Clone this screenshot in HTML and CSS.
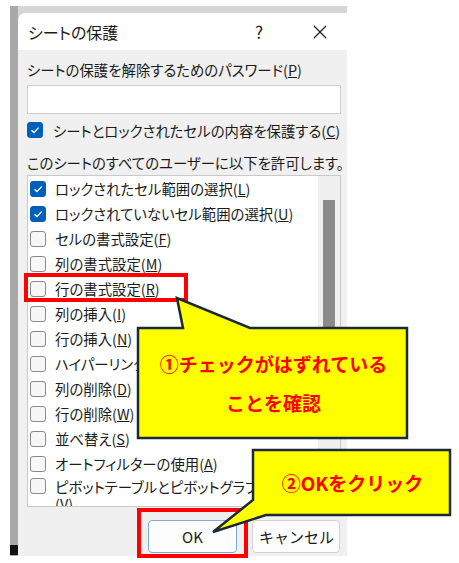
FILE: index.html
```html
<!DOCTYPE html>
<html lang="ja">
<head>
    <meta charset="UTF-8">
    <title>シートの保護</title>
    <link rel="stylesheet" href="styles.css">
</head>
<body>
<div class="sheet">
    <div class="sheet-edge"><div class="sheet-edge-end"></div></div>
    <div class="dialog">
        <div class="titlebar">
            <span class="title">シートの保護</span>
            <span class="help">?</span>
            <span class="close">
                <svg width="16" height="16" viewBox="0 0 16 16"><path d="M2 2 L14 14 M14 2 L2 14" stroke="#222" stroke-width="1.3" fill="none"/></svg>
            </span>
        </div>
        <div class="body">
            <div class="field-label">シートの保護を解除するためのパスワード(<u>P</u>)</div>
            <input class="password" type="password">
            <div class="check-row protect">
                <span class="box checked"><svg width="14" height="14" viewBox="0 0 14 14"><path d="M3.5 7.2 L6 9.6 L10.6 4.6" stroke="#fff" stroke-width="1.4" fill="none"/></svg></span>
                <span>シートとロックされたセルの内容を保護する(<u>C</u>)</span>
            </div>
            <div class="allow-label">このシートのすべてのユーザーに以下を許可します。</div>
            <div class="list">
                <div class="items">
                    <div class="check-row item"><span class="box checked"><svg width="14" height="14" viewBox="0 0 14 14"><path d="M3.5 7.2 L6 9.6 L10.6 4.6" stroke="#fff" stroke-width="1.4" fill="none"/></svg></span><span>ロックされたセル範囲の選択(<u>L</u>)</span></div>
                    <div class="check-row item"><span class="box checked"><svg width="14" height="14" viewBox="0 0 14 14"><path d="M3.5 7.2 L6 9.6 L10.6 4.6" stroke="#fff" stroke-width="1.4" fill="none"/></svg></span><span>ロックされていないセル範囲の選択(<u>U</u>)</span></div>
                    <div class="check-row item"><span class="box"></span><span>セルの書式設定(<u>F</u>)</span></div>
                    <div class="check-row item"><span class="box"></span><span>列の書式設定(<u>M</u>)</span></div>
                    <div class="check-row item"><span class="box"></span><span>行の書式設定(<u>R</u>)</span></div>
                    <div class="check-row item"><span class="box"></span><span>列の挿入(<u>I</u>)</span></div>
                    <div class="check-row item"><span class="box"></span><span>行の挿入(<u>N</u>)</span></div>
                    <div class="check-row item"><span class="box"></span><span>ハイパーリンクの挿入(<u>K</u>)</span></div>
                    <div class="check-row item"><span class="box"></span><span>列の削除(<u>D</u>)</span></div>
                    <div class="check-row item"><span class="box"></span><span>行の削除(<u>W</u>)</span></div>
                    <div class="check-row item"><span class="box"></span><span>並べ替え(<u>S</u>)</span></div>
                    <div class="check-row item"><span class="box"></span><span>オートフィルターの使用(<u>A</u>)</span></div>
                    <div class="check-row item wrap"><span class="box"></span><span>ピボットテーブルとピボットグラフを使用<br>(<u>V</u>)</span></div>
                </div>
                <div class="scroll"><div class="thumb"></div></div>
            </div>
            <div class="buttons">
                <button class="btn default">OK</button>
                <button class="btn">キャンセル</button>
            </div>
        </div>
    </div>
</div>

<!-- annotations -->
<div class="mark mark-row"></div>
<div class="mark mark-ok"></div>

<div class="callout callout-1">
    <svg class="shape" width="273" height="144" viewBox="0 0 273 144"><path d="M2 32 H47 L41 2 L114 32 H271 V142 H2 Z" fill="#ffff00" stroke="#1c2a38" stroke-width="2.5" stroke-linejoin="miter"/></svg>
    <div class="callout-text">①チェックがはずれている<br>ことを確認</div>
</div>
<div class="callout callout-2">
    <svg class="shape" width="241" height="86" viewBox="0 0 241 86"><path d="M42 2 H239 V67 H55 L2 84 L42 52 Z" fill="#ffff00" stroke="#1c2a38" stroke-width="2.5" stroke-linejoin="miter"/></svg>
    <div class="callout-text">②OKをクリック</div>
</div>
</body>
</html>
```

FILE: styles.css
```css
body {
    margin: 0;
    background-color: #fff;
    font-family: "Noto Sans CJK JP", "Noto Sans", sans-serif;
    font-size: 14.4px;
    color: #1b1b1b;
    font-feature-settings: "palt";
    white-space: nowrap;
}

.sheet {
    display: flex;
    width: 337px;
    height: 550px;
    margin: 6px 0 0 10px;
    background-color: #d6d6d6;
}
.sheet-edge {
    width: 8px;
    flex-shrink: 0;
    background-color: #a9a9a9;
    display: flex;
    flex-direction: column;
    justify-content: flex-end;
}
.sheet-edge-end {
    height: 10px;
    margin-bottom: 1px;
    background-color: #111;
}

.dialog {
    width: 329px;
    height: 543px;
    margin-top: 7px;
    background-color: #f0f0f0;
    border-radius: 8px 0 0 0;
    overflow: hidden;
    display: flex;
    flex-direction: column;
}
.titlebar {
    height: 37px;
    flex-shrink: 0;
    background-color: #fff;
    display: flex;
    align-items: center;
    padding-left: 10px;
    padding-right: 12px;
}
.title {
    flex: 1;
    font-size: 16px;
}
.help {
    width: 20px;
    text-align: center;
    font-size: 17px;
    margin-right: 36px;
}
.close {
    width: 30px;
    display: flex;
    justify-content: center;
}

.body {
    padding: 10px 6px 0 9px;
}
.field-label {
    line-height: 20px;
}
.password {
    display: block;
    box-sizing: border-box;
    width: 314px;
    height: 29px;
    margin: 5px 0 0;
    border: 1px solid #cfcfcf;
    background-color: #fff;
}
.check-row {
    display: flex;
    align-items: center;
}
.protect {
    height: 20px;
    margin-top: 6px;
    gap: 10px;
}
.box {
    box-sizing: border-box;
    width: 16px;
    height: 16px;
    flex-shrink: 0;
    border: 1px solid #8a8a8a;
    border-radius: 3px;
    background-color: #f7f7f7;
    display: flex;
    align-items: center;
    justify-content: center;
}
.box.checked {
    background-color: #005fb8;
    border-color: #005fb8;
}
.allow-label {
    margin-top: 13px;
    line-height: 20px;
}

.list {
    box-sizing: border-box;
    width: 314px;
    height: 332px;
    margin-top: 2px;
    border: 1px solid #c9c9c9;
    background-color: #fff;
    display: flex;
    overflow: hidden;
}
.items {
    flex: 1;
    min-width: 0;
    overflow: hidden;
    padding: 0 0 0 2px;
}
.item {
    height: 25px;
    gap: 9px;
}
.item.wrap {
    height: auto;
    align-items: flex-start;
    padding-top: 2px;
    line-height: 17px;
}
.scroll {
    width: 22px;
    flex-shrink: 0;
    background-color: #f0f0f0;
}
.thumb {
    width: 12px;
    height: 232px;
    margin: 24px auto 0;
    background-color: #8a8a8a;
}

.buttons {
    display: flex;
    justify-content: flex-end;
    gap: 15px;
    margin-top: 13px;
    padding-right: 1px;
}
.btn {
    height: 33px;
    width: 88px;
    font-family: inherit;
    font-size: 15px;
    color: #1b1b1b;
    background-color: #fdfdfd;
    border: 1px solid #d2d2d2;
    border-radius: 4px;
}
.btn.default {
    width: 89px;
    border-color: #7fa9d6;
}

.mark {
    position: absolute;
    box-sizing: border-box;
    border: 4px solid #ff0000;
}
.mark-row {
    left: 24px;
    top: 273px;
    width: 164px;
    height: 29px;
}
.mark-ok {
    left: 137px;
    top: 508px;
    width: 111px;
    height: 50px;
}

.callout {
    position: absolute;
    color: #ff0000;
    font-weight: bold;
    font-size: 19px;
    font-feature-settings: normal;
    text-align: center;
}
.callout .shape {
    position: absolute;
    left: 0;
    top: 0;
}
.callout-text {
    position: relative;
}
.callout-1 {
    left: 136px;
    top: 296px;
    width: 273px;
    height: 144px;
}
.callout-1 .callout-text {
    padding: 48px 0 0 2px;
    line-height: 39px;
}
.callout-2 {
    left: 211px;
    top: 448px;
    width: 241px;
    height: 86px;
}
.callout-2 .callout-text {
    padding: 2px 0 0 42px;
    line-height: 65px;
}
```
